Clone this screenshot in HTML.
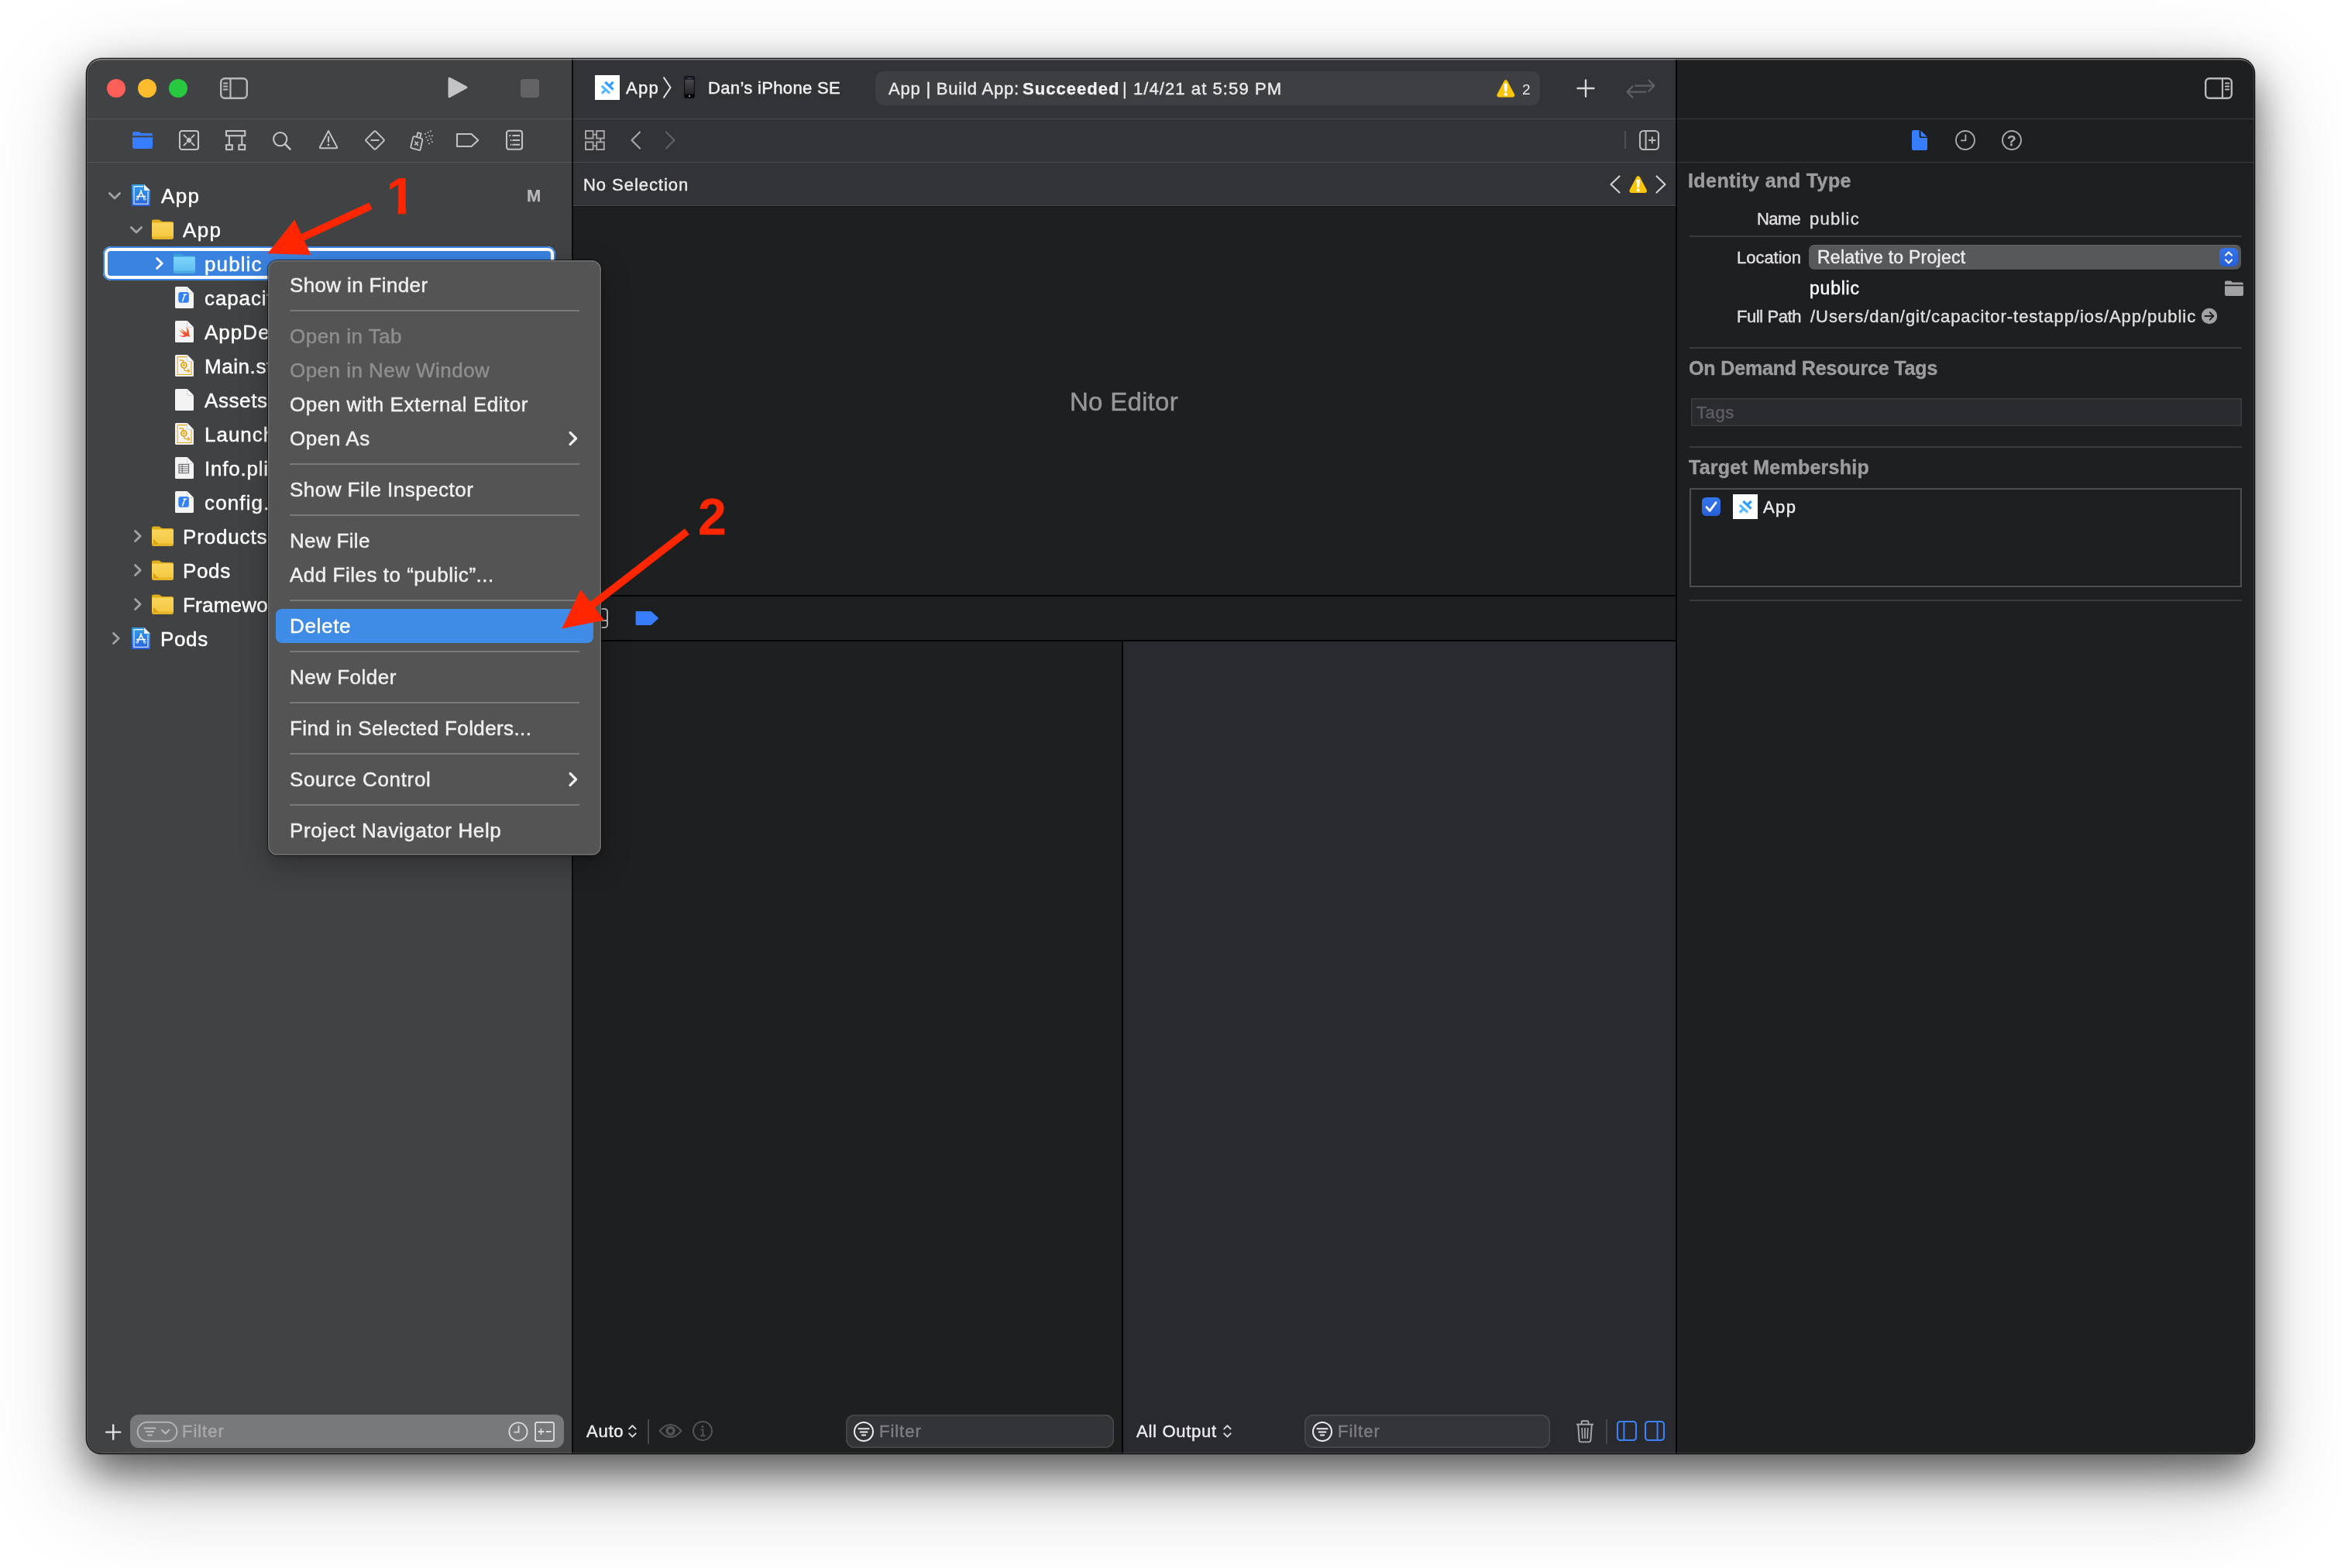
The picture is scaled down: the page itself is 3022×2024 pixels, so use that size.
<!DOCTYPE html>
<html lang="en"><head><meta charset="utf-8"><title>Xcode</title>
<style>
html,body{margin:0;padding:0;background:#fff;}
body{width:3022px;height:2024px;position:relative;overflow:hidden;font-family:"Liberation Sans",sans-serif;}
.b{position:absolute;display:block;}
.t{position:absolute;white-space:nowrap;display:block;will-change:transform;}
#shadow{position:absolute;left:111px;top:75px;width:2800px;height:1802px;border-radius:20px;
 box-shadow:0 0 0 .5px rgba(0,0,0,.5),0 24px 54px rgba(0,0,0,.58),0 40px 130px rgba(0,0,0,.22);}
#win{position:absolute;left:111px;top:75px;width:2800px;height:1802px;border-radius:20px;overflow:hidden;background:#1e1f21;}
#c{position:absolute;left:-111px;top:-75px;width:3022px;height:2024px;}
#rim{position:absolute;left:111px;top:75px;width:2800px;height:1802px;border-radius:20px;box-shadow:inset 0 0 0 1px rgba(0,0,0,.85), inset 0 0 0 2px rgba(255,255,255,.13), inset 0 2.5px 0 0 rgba(255,255,255,.3);pointer-events:none;}
</style></head><body>
<div id="shadow"></div>
<div id="win"><div id="c">
<div class="b" style="left:111px;top:75px;width:628px;height:1802px;background:#414244;"></div>
<div class="b" style="left:738px;top:75px;width:2px;height:1802px;background:#0c0c0d;"></div>
<div class="b" style="left:740px;top:75px;width:1423px;height:192px;background:#323336;"></div>
<div class="b" style="left:740px;top:267px;width:1423px;height:502px;background:#1e1f21;"></div>
<div class="b" style="left:740px;top:768px;width:1423px;height:2px;background:#050505;"></div>
<div class="b" style="left:740px;top:770px;width:1423px;height:56px;background:#1e1f21;"></div>
<div class="b" style="left:740px;top:826px;width:1423px;height:2px;background:#050505;"></div>
<div class="b" style="left:740px;top:828px;width:708px;height:1049px;background:#1e1f21;"></div>
<div class="b" style="left:1448px;top:828px;width:2px;height:1049px;background:#050505;"></div>
<div class="b" style="left:1450px;top:828px;width:713px;height:1049px;background:#292a30;"></div>
<div class="b" style="left:2163px;top:75px;width:2px;height:1802px;background:#050505;"></div>
<div class="b" style="left:2165px;top:75px;width:746px;height:1802px;background:#1e1f21;"></div>
<div class="b" style="left:111px;top:153px;width:627px;height:1px;background:#535456;"></div>
<div class="b" style="left:111px;top:209px;width:627px;height:1px;background:#535456;"></div>
<div class="b" style="left:740px;top:153px;width:1423px;height:1px;background:#4b4c4f;"></div>
<div class="b" style="left:740px;top:209px;width:1423px;height:1px;background:#4b4c4f;"></div>
<div class="b" style="left:740px;top:265px;width:1423px;height:1px;background:#4b4c4f;"></div>
<div class="b" style="left:740px;top:266px;width:1423px;height:1px;background:#111;"></div>
<div class="b" style="left:2165px;top:153px;width:746px;height:1px;background:#3a3b3e;"></div>
<div class="b" style="left:2165px;top:209px;width:746px;height:1px;background:#3a3b3e;"></div>
<div class="b" style="left:138px;top:102px;width:24px;height:24px;border-radius:50%;background:#fc5f57;"></div>
<div class="b" style="left:178px;top:102px;width:24px;height:24px;border-radius:50%;background:#fdbc2e;"></div>
<div class="b" style="left:218px;top:102px;width:24px;height:24px;border-radius:50%;background:#28c840;"></div>
<svg class="b" style="left:283px;top:99px;" width="38" height="30" viewBox="0 0 38 30"><rect x="2.2" y="2.2" width="33.6" height="25.6" rx="5" fill="none" stroke="#b9b9bb" stroke-width="2.4"/>
<line x1="14.5" y1="2" x2="14.5" y2="28" stroke="#b9b9bb" stroke-width="2.2"/>
<g stroke="#b9b9bb" stroke-width="2" stroke-linecap="round"><line x1="6" y1="8.5" x2="10.3" y2="8.5"/><line x1="6" y1="12.5" x2="10.3" y2="12.5"/><line x1="6" y1="16.5" x2="10.3" y2="16.5"/></g></svg>
<svg class="b" style="left:576px;top:97px;" width="30" height="32" viewBox="0 0 30 32"><path d="M4 4.2 L26 15.8 L4 27.6 Z" fill="#c3c3c5" stroke="#c3c3c5" stroke-width="3" stroke-linejoin="round"/></svg>
<div class="b" style="left:672px;top:102px;width:24px;height:24px;background:#636366;border-radius:4px;"></div>
<svg class="b" style="left:768px;top:97px;" width="32" height="32" viewBox="0 0 32 32"><rect width="32" height="32" fill="#fff"/>
<g stroke-width="3.1" fill="none"><path d="M13.3 9.0 L23.6 18.6" stroke="#2f9dff"/><path d="M18.6 13.9 L23.7 8.8" stroke="#2f9dff"/>
<path d="M8.8 13.9 L19.1 23.3" stroke="#53b9ff"/><path d="M13.9 18.7 L8.9 23.7" stroke="#53b9ff"/></g></svg>
<span class="t" style="left:808.40px;top:101px;font-size:22px;line-height:26px;color:#f2f2f2;letter-spacing:1.260px;-webkit-text-stroke:0.45px #f2f2f2;">App</span>
<svg class="b" style="left:853px;top:97px;" width="18" height="32" viewBox="0 0 18 32"><path d="M3.5 2.5 L12.5 16 L3.5 29.5" fill="none" stroke="#e4e4e4" stroke-width="2"/></svg>
<svg class="b" style="left:881px;top:97px;" width="18" height="32" viewBox="0 0 18 32"><defs><linearGradient id="ph" x1="0" y1="0" x2="0" y2="1"><stop offset="0" stop-color="#4a4a4d"/><stop offset="1" stop-color="#232325"/></linearGradient></defs>
<rect x="2" y="1" width="14" height="29" rx="2.2" fill="#050506" stroke="#2a2b33" stroke-width="0.8"/>
<rect x="3.2" y="6" width="11.6" height="18.6" fill="url(#ph)"/><rect x="3.2" y="2.2" width="11.6" height="3.8" fill="#1d2030"/>
<rect x="8" y="26" width="2" height="2" fill="#8a8a8a"/><rect x="7" y="3.6" width="4" height="0.9" fill="#555a6a"/></svg>
<span class="t" style="left:913.54px;top:101px;font-size:22px;line-height:26px;color:#f2f2f2;letter-spacing:0.340px;-webkit-text-stroke:0.45px #f2f2f2;">Dan’s iPhone SE</span>
<div class="b" style="left:1130px;top:92px;width:858px;height:44px;background:#3e3f42;border-radius:11px;"></div>
<span class="t" style="left:1147.00px;top:102px;font-size:22px;line-height:26px;color:#e9e9ea;letter-spacing:0.793px;-webkit-text-stroke:0.45px #e9e9ea;">App | Build App:</span>
<span class="t" style="left:1320.04px;top:102px;font-size:22px;line-height:26px;color:#f2f2f3;letter-spacing:1.029px;font-weight:bold;-webkit-text-stroke:0.25px #f2f2f3;">Succeeded</span>
<span class="t" style="left:1449.42px;top:102px;font-size:22px;line-height:26px;color:#e9e9ea;letter-spacing:1.082px;-webkit-text-stroke:0.45px #e9e9ea;">| 1/4/21 at 5:59 PM</span>
<svg class="b" style="left:1932.3px;top:101.6px;" width="23.6" height="24.6" viewBox="0 0 24 25"><path d="M9.7 2.7 Q12 -0.7 14.3 2.7 L23.2 19.5 Q24.8 23.6 20.6 23.9 L3.4 23.9 Q-0.8 23.6 0.8 19.5 Z" fill="#f8c50a"/>
<path d="M9.7 7.4 Q9.7 5.6 12 5.6 Q14.3 5.6 14.3 7.4 L13.5 15.9 Q13.4 17.1 12 17.1 Q10.6 17.1 10.5 15.9 Z" fill="#fff"/><circle cx="12" cy="20.2" r="2.05" fill="#fff"/></svg>
<span class="t" style="left:1964.65px;top:104px;font-size:19px;line-height:23px;color:#e9e9ea;">2</span>
<svg class="b" style="left:2035px;top:102px;" width="24" height="24" viewBox="0 0 24 24"><path d="M12 1.5 V22.5 M1.5 12 H22.5" stroke="#d6d6d8" stroke-width="2.4" stroke-linecap="round"/></svg>
<svg class="b" style="left:2098px;top:100px;" width="40" height="28" viewBox="0 0 40 28"><g fill="none" stroke="#5e5f62" stroke-width="2.2" stroke-linecap="round" stroke-linejoin="round"><path d="M13 10.6 H37 M30.4 3.6 L37.4 10.6 L30.4 17.6"/><path d="M26.5 18.6 H2.5 M9.5 11.6 L2.5 18.6 L9.5 25.6"/></g></svg>
<svg class="b" style="left:2845px;top:99px;" width="38" height="30" viewBox="0 0 38 30"><rect x="2.2" y="2.2" width="33.6" height="25.6" rx="5" fill="none" stroke="#b9b9bb" stroke-width="2.4"/>
<line x1="24" y1="2" x2="24" y2="28" stroke="#b9b9bb" stroke-width="2.2"/>
<g stroke="#b9b9bb" stroke-width="2" stroke-linecap="round"><line x1="28" y1="8.5" x2="32.2" y2="8.5"/><line x1="28" y1="12.5" x2="32.2" y2="12.5"/><line x1="28" y1="16.5" x2="32.2" y2="16.5"/></g></svg>
<svg class="b" style="left:171px;top:169px;" width="27" height="24" viewBox="0 0 27 24"><path d="M0 6.2 V3.2 Q0 1 2.4 1 H7.2 Q8.6 1 9.8 1.9 L10.6 2.5 Q11.4 3 12.6 3 H23.4 Q26 3 26 5.6 V6.2 Z M0 8.3 H26 V20.2 Q26 23 23.2 23 H2.8 Q0 23 0 20.2 Z" fill="#377dff"/></svg>
<svg class="b" style="left:230px;top:167px;" width="28" height="28" viewBox="0 0 28 28"><rect x="2" y="2" width="24" height="24" rx="3" fill="none" stroke="#c2c2c4" stroke-width="2.1"/><circle cx="14" cy="14" r="3.2" fill="#c2c2c4"/>
<g stroke="#c2c2c4" stroke-width="1.9" stroke-linecap="round"><path d="M7.5 7.5 L10.6 10.6 M20.5 7.5 L17.4 10.6 M7.5 20.5 L10.6 17.4 M20.5 20.5 L17.4 17.4"/></g></svg>
<svg class="b" style="left:290px;top:167px;" width="28" height="28" viewBox="0 0 28 28"><g fill="none" stroke="#c2c2c4" stroke-width="2.1"><rect x="2" y="2" width="24.3" height="6.2"/><rect x="2" y="20.2" width="7.8" height="5.9"/><rect x="18.4" y="20.2" width="7.8" height="5.9"/><path d="M5.9 8.2 V20.2 M22.3 8.2 V20.2"/></g></svg>
<svg class="b" style="left:350px;top:167px;" width="28" height="28" viewBox="0 0 28 28"><circle cx="11.7" cy="12.6" r="8.6" fill="none" stroke="#c2c2c4" stroke-width="2.1"/><path d="M18 19 L24.6 25.6" stroke="#c2c2c4" stroke-width="2.6" stroke-linecap="round"/></svg>
<svg class="b" style="left:410px;top:166px;" width="28" height="28" viewBox="0 0 28 28"><path d="M14 3 L25 23.6 Q25.6 25.2 24 25.2 H4 Q2.4 25.2 3 23.6 Z" fill="none" stroke="#c2c2c4" stroke-width="2" stroke-linejoin="round"/><rect x="12.9" y="9.8" width="2.2" height="8" rx="1.1" fill="#c2c2c4"/><circle cx="14" cy="21" r="1.4" fill="#c2c2c4"/></svg>
<svg class="b" style="left:469px;top:166px;" width="30" height="30" viewBox="0 0 30 30"><rect x="6.2" y="6.2" width="17.6" height="17.6" rx="2" transform="rotate(45 15 15)" fill="none" stroke="#c2c2c4" stroke-width="2"/><path d="M10.4 15 H19.6" stroke="#c2c2c4" stroke-width="2.1" stroke-linecap="round"/></svg>
<svg class="b" style="left:528px;top:166px;" width="34" height="30" viewBox="0 0 34 30"><g fill="none" stroke="#c2c2c4" stroke-width="1.9" stroke-linejoin="round"><path d="M7.2 10.2 L16.2 12.8 Q17.6 13.3 17.3 14.8 L14.6 27 Q14.3 28.2 13 27.9 L3.2 25.2 Q2 24.8 2.3 23.6 L5.2 11.4 Q5.6 9.8 7.2 10.2 Z"/><path d="M10 10.8 L11.4 5.2 L15.6 6.4 L14.2 12"/><path d="M7.6 16.6 L11.8 22 M12.2 17.2 L7.2 21.2" stroke-width="1.7"/></g>
<g fill="#c2c2c4"><rect x="20" y="6" width="1.7" height="1.7"/><rect x="23.6" y="4.2" width="1.7" height="1.7"/><rect x="27.2" y="2.4" width="1.7" height="1.7"/><rect x="21.6" y="10.4" width="1.7" height="1.7"/><rect x="25.4" y="8.6" width="1.7" height="1.7"/><rect x="29" y="8.4" width="1.7" height="1.7"/><rect x="23.4" y="14.4" width="1.7" height="1.7"/><rect x="27.4" y="12.6" width="1.7" height="1.7"/><rect x="29" y="16.4" width="1.7" height="1.7"/><rect x="25.2" y="18.6" width="1.7" height="1.7"/></g></svg>
<svg class="b" style="left:588px;top:170px;" width="32" height="22" viewBox="0 0 32 22"><path d="M2 3 H20.6 L29.2 11 L20.6 19 H2 Z" fill="none" stroke="#c2c2c4" stroke-width="2.1" stroke-linejoin="round"/></svg>
<svg class="b" style="left:651px;top:166px;" width="26" height="30" viewBox="0 0 26 30"><rect x="3" y="2.8" width="20" height="24" rx="3" fill="none" stroke="#c2c2c4" stroke-width="2.1"/><g stroke="#c2c2c4" stroke-width="1.9"><path d="M10.4 9 H20 M10.4 15 H20 M10.4 20.8 H20"/><path d="M6.4 9 H8.2 M7.8 15 H9.4 M7.8 20.8 H9.4"/></g></svg>
<svg class="b" style="left:754px;top:167px;" width="28" height="28" viewBox="0 0 28 28"><g fill="none" stroke="#a4a4a6" stroke-width="2"><rect x="2" y="2" width="9.6" height="9.6"/><rect x="16.2" y="2" width="9.6" height="9.6"/><rect x="2" y="16.4" width="9.6" height="9.6"/><rect x="16.2" y="16.4" width="9.6" height="9.6"/><path d="M11.6 6.8 H16.2 M11.6 21.2 H16.2 M21 11.6 V16.4 M16.2 21.2 H11.6"/></g></svg>
<svg class="b" style="left:811px;top:167px;" width="20" height="28" viewBox="0 0 20 28"><path d="M15 3.5 L4.5 14 L15 24.5" fill="none" stroke="#a4a4a6" stroke-width="2.2" stroke-linecap="round" stroke-linejoin="round"/></svg>
<svg class="b" style="left:855px;top:167px;" width="20" height="28" viewBox="0 0 20 28"><path d="M5 3.5 L15.5 14 L5 24.5" fill="none" stroke="#5f6063" stroke-width="2.2" stroke-linecap="round" stroke-linejoin="round"/></svg>
<div class="b" style="left:2097px;top:169px;width:2px;height:23px;background:#4d4e51;"></div>
<svg class="b" style="left:2115px;top:167px;" width="28" height="28" viewBox="0 0 28 28"><rect x="2" y="2" width="24" height="24" rx="4.5" fill="none" stroke="#b9b9bb" stroke-width="2.1"/><path d="M9.6 2 V26" stroke="#b9b9bb" stroke-width="2"/><path d="M17.8 9.4 V18.6 M13.2 14 H22.4" stroke="#b9b9bb" stroke-width="2" /></svg>
<span class="t" style="left:753.24px;top:226px;font-size:22px;line-height:26px;color:#eaeaeb;letter-spacing:0.950px;-webkit-text-stroke:0.45px #eaeaeb;">No Selection</span>
<svg class="b" style="left:2076px;top:225px;" width="18" height="26" viewBox="0 0 18 26"><path d="M14.5 2.5 L3.5 13 L14.5 23.5" fill="none" stroke="#d0d0d2" stroke-width="2.2" stroke-linecap="round" stroke-linejoin="round"/></svg>
<svg class="b" style="left:2103.3px;top:226.2px;" width="23.4" height="24.2" viewBox="0 0 24 25"><path d="M9.7 2.7 Q12 -0.7 14.3 2.7 L23.2 19.5 Q24.8 23.6 20.6 23.9 L3.4 23.9 Q-0.8 23.6 0.8 19.5 Z" fill="#f8c50a"/>
<path d="M9.7 7.4 Q9.7 5.6 12 5.6 Q14.3 5.6 14.3 7.4 L13.5 15.9 Q13.4 17.1 12 17.1 Q10.6 17.1 10.5 15.9 Z" fill="#fff"/><circle cx="12" cy="20.2" r="2.05" fill="#fff"/></svg>
<svg class="b" style="left:2135px;top:225px;" width="18" height="26" viewBox="0 0 18 26"><path d="M3.5 2.5 L14.5 13 L3.5 23.5" fill="none" stroke="#d0d0d2" stroke-width="2.2" stroke-linecap="round" stroke-linejoin="round"/></svg>
<div class="b" style="left:133px;top:318px;width:584px;height:44px;background:#3b83e1;border-radius:10px;box-shadow:inset 0 0 0 2px #3b83e1, inset 0 0 0 6px #fff;"></div>
<svg class="b" style="left:138px;top:246px;" width="20" height="13" viewBox="0 0 20 13"><path d="M3.4 3.4 L10 10 L16.6 3.4" fill="none" stroke="#a2a2a5" stroke-width="2.8" stroke-linecap="round" stroke-linejoin="round"/></svg>
<svg class="b" style="left:170px;top:238px;" width="24" height="28" viewBox="0 0 24 28"><defs><linearGradient id="pg1" x1="0" y1="0" x2="0" y2="1"><stop offset="0" stop-color="#2f9ee9"/><stop offset="1" stop-color="#2a62df"/></linearGradient></defs>
<path d="M1.2 0 H16 L24 8 V26.8 Q24 28 22.8 28 H1.2 Q0 28 0 26.8 V1.2 Q0 0 1.2 0 Z" fill="url(#pg1)"/>
<path d="M16 0 L24 8 H17.2 Q16 8 16 6.8 Z" fill="#eaf3fd"/>
<path d="M3 2.6 H15 M21 9 V25.2 H3 V2.6" fill="none" stroke="#fff" stroke-width="1.1" opacity=".95"/>
<g fill="none" stroke="#fff" stroke-width="1.5" stroke-linecap="round"><path d="M12.6 8.2 L7.4 18.6 M11.4 8.2 L16.6 18.6 M6.4 15.6 H17.6"/></g>
<g fill="#2a6fe3" stroke="#fff" stroke-width="0.9"><circle cx="7.2" cy="19" r="1.3"/><circle cx="16.8" cy="19" r="1.3"/></g></svg>
<span class="t" style="left:208.20px;top:238px;font-size:26px;line-height:31px;color:#ffffff;letter-spacing:1.380px;-webkit-text-stroke:0.45px #ffffff;">App</span>
<svg class="b" style="left:166px;top:290px;" width="20" height="13" viewBox="0 0 20 13"><path d="M3.4 3.4 L10 10 L16.6 3.4" fill="none" stroke="#a2a2a5" stroke-width="2.8" stroke-linecap="round" stroke-linejoin="round"/></svg>
<svg class="b" style="left:196px;top:283px;" width="28" height="26" viewBox="0 0 28 26"><defs><linearGradient id="fg2" x1="0" y1="0" x2="0" y2="1"><stop offset="0" stop-color="#f9d55c"/><stop offset="1" stop-color="#f4c63d"/></linearGradient></defs>
<path d="M0 5 V2.6 Q0 0.4 2.2 0.4 H8.4 Q9.8 0.4 10.8 1.3 L11.8 2.2 Q12.8 3 14.2 3 H25.6 Q28 3 28 5.4 V8 H0 Z" fill="#e2ae1c"/>
<path d="M0 5.6 Q0 4.6 1 4.6 H27 Q28 4.6 28 5.6 V23.6 Q28 26 25.6 26 H2.4 Q0 26 0 23.6 Z" fill="url(#fg2)"/>
<path d="M0 22.4 H28 V23.6 Q28 26 25.6 26 H2.4 Q0 26 0 23.6 Z" fill="#d9a516" opacity=".55"/></svg>
<span class="t" style="left:236.40px;top:282px;font-size:26px;line-height:31px;color:#ffffff;letter-spacing:1.380px;-webkit-text-stroke:0.45px #ffffff;">App</span>
<svg class="b" style="left:199px;top:330px;" width="14" height="20" viewBox="0 0 14 20"><path d="M3.5 3.4 L10.2 10 L3.5 16.6" fill="none" stroke="#fff" stroke-width="2.8" stroke-linecap="round" stroke-linejoin="round"/></svg>
<svg class="b" style="left:224px;top:327px;" width="28" height="26" viewBox="0 0 28 26"><defs><linearGradient id="fg3" x1="0" y1="0" x2="0" y2="1"><stop offset="0" stop-color="#7dd3fb"/><stop offset="1" stop-color="#5cbdf0"/></linearGradient></defs>
<path d="M0 5 V2.6 Q0 0.4 2.2 0.4 H8.4 Q9.8 0.4 10.8 1.3 L11.8 2.2 Q12.8 3 14.2 3 H25.6 Q28 3 28 5.4 V8 H0 Z" fill="#3aa0dc"/>
<path d="M0 5.6 Q0 4.6 1 4.6 H27 Q28 4.6 28 5.6 V23.6 Q28 26 25.6 26 H2.4 Q0 26 0 23.6 Z" fill="url(#fg3)"/>
<path d="M0 22.4 H28 V23.6 Q28 26 25.6 26 H2.4 Q0 26 0 23.6 Z" fill="#3a9bd6" opacity=".55"/></svg>
<span class="t" style="left:263.81px;top:326px;font-size:26px;line-height:31px;color:#ffffff;letter-spacing:1.110px;-webkit-text-stroke:0.45px #ffffff;">public</span>
<svg class="b" style="left:226px;top:370px;" width="24" height="28" viewBox="0 0 24 28"><path d="M1.6 0 H15.6 L24 8.4 V26.4 Q24 28 22.4 28 H1.6 Q0 28 0 26.4 V1.6 Q0 0 1.6 0 Z" fill="#f3f3f4"/>
<path d="M15.6 0 L24 8.4 H17 Q15.6 8.4 15.6 7 Z" fill="#fbfbfc"/><path d="M15.6 0.4 V7 Q15.6 8.4 17 8.4 H23.6" fill="none" stroke="#c9c9cc" stroke-width="0.9"/><rect x="4.3" y="7" width="13.6" height="13.8" rx="3.4" fill="#3380f7"/><path d="M11.2 10.2 H14.5 M12.5 10.4 L9.6 18.7" stroke="#fff" stroke-width="1.5" fill="none" stroke-linecap="round"/></svg>
<span class="t" style="left:263.86px;top:370px;font-size:26px;line-height:31px;color:#ffffff;letter-spacing:0.878px;-webkit-text-stroke:0.45px #ffffff;">capacitor.config.json</span>
<svg class="b" style="left:226px;top:414px;" width="24" height="28" viewBox="0 0 24 28"><path d="M1.6 0 H15.6 L24 8.4 V26.4 Q24 28 22.4 28 H1.6 Q0 28 0 26.4 V1.6 Q0 0 1.6 0 Z" fill="#f3f3f4"/>
<path d="M15.6 0 L24 8.4 H17 Q15.6 8.4 15.6 7 Z" fill="#fbfbfc"/><path d="M15.6 0.4 V7 Q15.6 8.4 17 8.4 H23.6" fill="none" stroke="#c9c9cc" stroke-width="0.9"/><defs><linearGradient id="swg" x1="0" y1="0" x2="0" y2="1"><stop offset="0" stop-color="#f88a36"/><stop offset="1" stop-color="#f5382a"/></linearGradient></defs><path transform="translate(-1.7 -1.5) scale(1.03)" d="M5 18.6 Q9.4 21.6 13.6 19.6 Q9 16.4 6.2 11.8 Q9.6 15 13 16.8 Q10.6 14 9 11 Q12.6 14.6 16 16.6 Q17.4 12.6 14.6 8.6 Q20.4 12.8 19 18.4 Q20.6 20.2 19.8 22 Q18.8 20.2 16.8 20.6 Q10.6 23.6 5 18.6 Z" fill="url(#swg)"/></svg>
<span class="t" style="left:264.30px;top:414px;font-size:26px;line-height:31px;color:#ffffff;letter-spacing:1.023px;-webkit-text-stroke:0.45px #ffffff;">AppDelegate.swift</span>
<svg class="b" style="left:226px;top:458px;" width="24" height="28" viewBox="0 0 24 28"><path d="M1.6 0 H15.6 L24 8.4 V26.4 Q24 28 22.4 28 H1.6 Q0 28 0 26.4 V1.6 Q0 0 1.6 0 Z" fill="#f3f3f4"/>
<path d="M15.6 0 L24 8.4 H17 Q15.6 8.4 15.6 7 Z" fill="#fbfbfc"/><path d="M15.6 0.4 V7 Q15.6 8.4 17 8.4 H23.6" fill="none" stroke="#c9c9cc" stroke-width="0.9"/><path d="M3.2 2.6 H15 M21 9 V25.4 H3.2 V2.6" fill="none" stroke="#e2a81c" stroke-width="1.05"/>
<g fill="none" stroke="#e2a81c" stroke-width="1.3"><circle cx="11.4" cy="13.4" r="3.5" stroke-width="1.9"/><circle cx="11.4" cy="13.4" r="0.8" fill="#e2a81c"/><path d="M5.4 6.8 H8.6 Q11 6.8 11.2 9.6 M11.4 17 Q11.4 20.4 14.4 20.6 H18.4 M16.4 18.4 L18.6 20.6 L16.4 22.8"/></g></svg>
<span class="t" style="left:263.72px;top:458px;font-size:26px;line-height:31px;color:#ffffff;letter-spacing:0.564px;-webkit-text-stroke:0.45px #ffffff;">Main.storyboard</span>
<svg class="b" style="left:226px;top:502px;" width="24" height="28" viewBox="0 0 24 28"><path d="M1.6 0 H15.6 L24 8.4 V26.4 Q24 28 22.4 28 H1.6 Q0 28 0 26.4 V1.6 Q0 0 1.6 0 Z" fill="#f3f3f4"/>
<path d="M15.6 0 L24 8.4 H17 Q15.6 8.4 15.6 7 Z" fill="#fbfbfc"/><path d="M15.6 0.4 V7 Q15.6 8.4 17 8.4 H23.6" fill="none" stroke="#c9c9cc" stroke-width="0.9"/></svg>
<span class="t" style="left:264.30px;top:502px;font-size:26px;line-height:31px;color:#ffffff;letter-spacing:0.582px;-webkit-text-stroke:0.45px #ffffff;">Assets.xcassets</span>
<svg class="b" style="left:226px;top:546px;" width="24" height="28" viewBox="0 0 24 28"><path d="M1.6 0 H15.6 L24 8.4 V26.4 Q24 28 22.4 28 H1.6 Q0 28 0 26.4 V1.6 Q0 0 1.6 0 Z" fill="#f3f3f4"/>
<path d="M15.6 0 L24 8.4 H17 Q15.6 8.4 15.6 7 Z" fill="#fbfbfc"/><path d="M15.6 0.4 V7 Q15.6 8.4 17 8.4 H23.6" fill="none" stroke="#c9c9cc" stroke-width="0.9"/><path d="M3.2 2.6 H15 M21 9 V25.4 H3.2 V2.6" fill="none" stroke="#e2a81c" stroke-width="1.05"/>
<g fill="none" stroke="#e2a81c" stroke-width="1.3"><circle cx="11.4" cy="13.4" r="3.5" stroke-width="1.9"/><circle cx="11.4" cy="13.4" r="0.8" fill="#e2a81c"/><path d="M5.4 6.8 H8.6 Q11 6.8 11.2 9.6 M11.4 17 Q11.4 20.4 14.4 20.6 H18.4 M16.4 18.4 L18.6 20.6 L16.4 22.8"/></g></svg>
<span class="t" style="left:263.72px;top:546px;font-size:26px;line-height:31px;color:#ffffff;letter-spacing:0.995px;-webkit-text-stroke:0.45px #ffffff;">LaunchScreen.storyboard</span>
<svg class="b" style="left:226px;top:590px;" width="24" height="28" viewBox="0 0 24 28"><path d="M1.6 0 H15.6 L24 8.4 V26.4 Q24 28 22.4 28 H1.6 Q0 28 0 26.4 V1.6 Q0 0 1.6 0 Z" fill="#f3f3f4"/>
<path d="M15.6 0 L24 8.4 H17 Q15.6 8.4 15.6 7 Z" fill="#fbfbfc"/><path d="M15.6 0.4 V7 Q15.6 8.4 17 8.4 H23.6" fill="none" stroke="#c9c9cc" stroke-width="0.9"/><g fill="none" stroke="#6c6c70" stroke-width="1.1"><rect x="5" y="9.4" width="12.6" height="11.2"/><path d="M5 12.2 H17.6 M5 15 H17.6 M5 17.8 H17.6 M9.2 9.4 V20.6"/></g></svg>
<span class="t" style="left:263.56px;top:590px;font-size:26px;line-height:31px;color:#ffffff;letter-spacing:0.766px;-webkit-text-stroke:0.45px #ffffff;">Info.plist</span>
<svg class="b" style="left:226px;top:634px;" width="24" height="28" viewBox="0 0 24 28"><path d="M1.6 0 H15.6 L24 8.4 V26.4 Q24 28 22.4 28 H1.6 Q0 28 0 26.4 V1.6 Q0 0 1.6 0 Z" fill="#f3f3f4"/>
<path d="M15.6 0 L24 8.4 H17 Q15.6 8.4 15.6 7 Z" fill="#fbfbfc"/><path d="M15.6 0.4 V7 Q15.6 8.4 17 8.4 H23.6" fill="none" stroke="#c9c9cc" stroke-width="0.9"/><rect x="4.3" y="7" width="13.6" height="13.8" rx="3.4" fill="#3380f7"/><path d="M11.2 10.2 H14.5 M12.5 10.4 L9.6 18.7" stroke="#fff" stroke-width="1.5" fill="none" stroke-linecap="round"/></svg>
<span class="t" style="left:263.76px;top:634px;font-size:26px;line-height:31px;color:#ffffff;letter-spacing:1.135px;-webkit-text-stroke:0.45px #ffffff;">config.xml</span>
<svg class="b" style="left:171px;top:682px;" width="14" height="20" viewBox="0 0 14 20"><path d="M3.5 3.4 L10.2 10 L3.5 16.6" fill="none" stroke="#a2a2a5" stroke-width="2.8" stroke-linecap="round" stroke-linejoin="round"/></svg>
<svg class="b" style="left:196px;top:679px;" width="28" height="26" viewBox="0 0 28 26"><defs><linearGradient id="fg4" x1="0" y1="0" x2="0" y2="1"><stop offset="0" stop-color="#f9d55c"/><stop offset="1" stop-color="#f4c63d"/></linearGradient></defs>
<path d="M0 5 V2.6 Q0 0.4 2.2 0.4 H8.4 Q9.8 0.4 10.8 1.3 L11.8 2.2 Q12.8 3 14.2 3 H25.6 Q28 3 28 5.4 V8 H0 Z" fill="#e2ae1c"/>
<path d="M0 5.6 Q0 4.6 1 4.6 H27 Q28 4.6 28 5.6 V23.6 Q28 26 25.6 26 H2.4 Q0 26 0 23.6 Z" fill="url(#fg4)"/>
<path d="M0 22.4 H28 V23.6 Q28 26 25.6 26 H2.4 Q0 26 0 23.6 Z" fill="#d9a516" opacity=".55"/><path d="M1.8 16.4 L9.6 23.6 H3 Q1.8 23.6 1.8 22.4 Z" fill="#d9a516"/></svg>
<span class="t" style="left:235.82px;top:678px;font-size:26px;line-height:31px;color:#ffffff;letter-spacing:0.846px;-webkit-text-stroke:0.45px #ffffff;">Products</span>
<svg class="b" style="left:171px;top:726px;" width="14" height="20" viewBox="0 0 14 20"><path d="M3.5 3.4 L10.2 10 L3.5 16.6" fill="none" stroke="#a2a2a5" stroke-width="2.8" stroke-linecap="round" stroke-linejoin="round"/></svg>
<svg class="b" style="left:196px;top:723px;" width="28" height="26" viewBox="0 0 28 26"><defs><linearGradient id="fg5" x1="0" y1="0" x2="0" y2="1"><stop offset="0" stop-color="#f9d55c"/><stop offset="1" stop-color="#f4c63d"/></linearGradient></defs>
<path d="M0 5 V2.6 Q0 0.4 2.2 0.4 H8.4 Q9.8 0.4 10.8 1.3 L11.8 2.2 Q12.8 3 14.2 3 H25.6 Q28 3 28 5.4 V8 H0 Z" fill="#e2ae1c"/>
<path d="M0 5.6 Q0 4.6 1 4.6 H27 Q28 4.6 28 5.6 V23.6 Q28 26 25.6 26 H2.4 Q0 26 0 23.6 Z" fill="url(#fg5)"/>
<path d="M0 22.4 H28 V23.6 Q28 26 25.6 26 H2.4 Q0 26 0 23.6 Z" fill="#d9a516" opacity=".55"/><path d="M1.8 16.4 L9.6 23.6 H3 Q1.8 23.6 1.8 22.4 Z" fill="#d9a516"/></svg>
<span class="t" style="left:235.82px;top:722px;font-size:26px;line-height:31px;color:#ffffff;letter-spacing:0.637px;-webkit-text-stroke:0.45px #ffffff;">Pods</span>
<svg class="b" style="left:171px;top:770px;" width="14" height="20" viewBox="0 0 14 20"><path d="M3.5 3.4 L10.2 10 L3.5 16.6" fill="none" stroke="#a2a2a5" stroke-width="2.8" stroke-linecap="round" stroke-linejoin="round"/></svg>
<svg class="b" style="left:196px;top:767px;" width="28" height="26" viewBox="0 0 28 26"><defs><linearGradient id="fg6" x1="0" y1="0" x2="0" y2="1"><stop offset="0" stop-color="#f9d55c"/><stop offset="1" stop-color="#f4c63d"/></linearGradient></defs>
<path d="M0 5 V2.6 Q0 0.4 2.2 0.4 H8.4 Q9.8 0.4 10.8 1.3 L11.8 2.2 Q12.8 3 14.2 3 H25.6 Q28 3 28 5.4 V8 H0 Z" fill="#e2ae1c"/>
<path d="M0 5.6 Q0 4.6 1 4.6 H27 Q28 4.6 28 5.6 V23.6 Q28 26 25.6 26 H2.4 Q0 26 0 23.6 Z" fill="url(#fg6)"/>
<path d="M0 22.4 H28 V23.6 Q28 26 25.6 26 H2.4 Q0 26 0 23.6 Z" fill="#d9a516" opacity=".55"/><path d="M1.8 16.4 L9.6 23.6 H3 Q1.8 23.6 1.8 22.4 Z" fill="#d9a516"/></svg>
<span class="t" style="left:235.82px;top:766px;font-size:26px;line-height:31px;color:#ffffff;letter-spacing:0.238px;-webkit-text-stroke:0.45px #ffffff;">Frameworks</span>
<svg class="b" style="left:143px;top:814px;" width="14" height="20" viewBox="0 0 14 20"><path d="M3.5 3.4 L10.2 10 L3.5 16.6" fill="none" stroke="#a2a2a5" stroke-width="2.8" stroke-linecap="round" stroke-linejoin="round"/></svg>
<svg class="b" style="left:170px;top:810px;" width="24" height="28" viewBox="0 0 24 28"><defs><linearGradient id="pg7" x1="0" y1="0" x2="0" y2="1"><stop offset="0" stop-color="#2f9ee9"/><stop offset="1" stop-color="#2a62df"/></linearGradient></defs>
<path d="M1.2 0 H16 L24 8 V26.8 Q24 28 22.8 28 H1.2 Q0 28 0 26.8 V1.2 Q0 0 1.2 0 Z" fill="url(#pg7)"/>
<path d="M16 0 L24 8 H17.2 Q16 8 16 6.8 Z" fill="#eaf3fd"/>
<path d="M3 2.6 H15 M21 9 V25.2 H3 V2.6" fill="none" stroke="#fff" stroke-width="1.1" opacity=".95"/>
<g fill="none" stroke="#fff" stroke-width="1.5" stroke-linecap="round"><path d="M12.6 8.2 L7.4 18.6 M11.4 8.2 L16.6 18.6 M6.4 15.6 H17.6"/></g>
<g fill="#2a6fe3" stroke="#fff" stroke-width="0.9"><circle cx="7.2" cy="19" r="1.3"/><circle cx="16.8" cy="19" r="1.3"/></g></svg>
<span class="t" style="left:207.12px;top:810px;font-size:26px;line-height:31px;color:#ffffff;letter-spacing:0.637px;-webkit-text-stroke:0.45px #ffffff;">Pods</span>
<span class="t" style="left:679.57px;top:240px;font-size:22px;line-height:26px;color:#b9b9bb;letter-spacing:1.600px;font-weight:bold;-webkit-text-stroke:0.25px #b9b9bb;">M</span>
<svg class="b" style="left:134px;top:1836px;" width="24" height="24" viewBox="0 0 24 24"><path d="M12.2 3.4 V21.8 M3 12.6 H21.4" stroke="#e2e2e4" stroke-width="2.4" stroke-linecap="round"/></svg>
<div class="b" style="left:168px;top:1826px;width:560px;height:43px;background:#78797b;border-radius:11px;"></div>
<svg class="b" style="left:176px;top:1834px;" width="54" height="28" viewBox="0 0 54 28"><rect x="1.6" y="1.8" width="50.8" height="24.4" rx="12.2" fill="none" stroke="#b3b3b5" stroke-width="2"/>
<g stroke="#b9b9bb" stroke-width="2" stroke-linecap="round"><path d="M10.6 9.6 H24.4 M12.8 14 H22.2 M15 18.4 H20"/><path d="M33 12 L37.6 16.4 L42.2 12" fill="none" stroke-linejoin="round" stroke-width="2.2"/></g></svg>
<span class="t" style="left:235.24px;top:1835px;font-size:22px;line-height:26px;color:#a9a9ab;letter-spacing:0.970px;-webkit-text-stroke:0.45px #a9a9ab;">Filter</span>
<svg class="b" style="left:655px;top:1834px;" width="28" height="28" viewBox="0 0 28 28"><circle cx="14" cy="14" r="11.6" fill="none" stroke="#d8d8da" stroke-width="1.9"/><path d="M14.6 6.6 V14.6 H8.4" fill="none" stroke="#d8d8da" stroke-width="1.9"/></svg>
<svg class="b" style="left:689px;top:1834px;" width="28" height="28" viewBox="0 0 28 28"><rect x="2" y="2" width="24" height="24" rx="2.4" fill="none" stroke="#d8d8da" stroke-width="1.9"/><path d="M5.6 14 H13.2 M9.4 10.2 V17.8 M15.8 14 H22.6" stroke="#d8d8da" stroke-width="1.9"/></svg>
<span class="t" style="left:1381.36px;top:499px;font-size:33px;line-height:40px;color:#979799;letter-spacing:0.261px;-webkit-text-stroke:0.45px #979799;">No Editor</span>
<svg class="b" style="left:758px;top:784px;" width="28" height="28" viewBox="0 0 28 28"><rect x="2" y="2" width="24" height="24" rx="3.5" fill="none" stroke="#b9b9bb" stroke-width="2"/><path d="M2 17 H26" stroke="#b9b9bb" stroke-width="2"/></svg>
<svg class="b" style="left:820px;top:788px;" width="32" height="22" viewBox="0 0 32 22"><path d="M1.6 1 H19.4 Q20.6 1 21.4 1.8 L30.2 10 L21.4 18.2 Q20.6 19 19.4 19 H1.6 Q0.6 19 0.6 18 V2 Q0.6 1 1.6 1 Z" fill="#377dff"/></svg>
<span class="t" style="left:757.00px;top:1835px;font-size:22px;line-height:26px;color:#ececee;letter-spacing:0.757px;-webkit-text-stroke:0.45px #ececee;">Auto</span>
<svg class="b" style="left:810px;top:1838px;" width="13" height="20" viewBox="0 0 13 20"><g fill="none" stroke="#d6d6d8" stroke-width="2" stroke-linecap="round" stroke-linejoin="round"><path d="M2.2 6.4 L6.4 2.2 L10.6 6.4 M2.2 12.4 L6.4 16.6 L10.6 12.4"/></g></svg>
<div class="b" style="left:836px;top:1832px;width:2px;height:32px;background:#48494c;"></div>
<svg class="b" style="left:849px;top:1834px;" width="34" height="26" viewBox="0 0 34 26"><path d="M2.6 13 Q16.5 -3.2 30.4 13 Q16.5 29.2 2.6 13 Z" fill="none" stroke="#525356" stroke-width="2"/><circle cx="16.5" cy="13" r="6.2" fill="#525356"/><circle cx="16.5" cy="13" r="2.6" fill="#1e1f21"/></svg>
<svg class="b" style="left:893px;top:1833px;" width="28" height="28" viewBox="0 0 28 28"><circle cx="14" cy="14" r="12" fill="none" stroke="#525356" stroke-width="2"/><circle cx="14" cy="8.4" r="1.5" fill="#525356"/><path d="M11.6 12.4 H14.4 V20 M11 20.2 H17.6" fill="none" stroke="#525356" stroke-width="1.9"/></svg>
<div class="b" style="left:1092px;top:1826px;width:346px;height:43px;background:#333437;border-radius:11px;box-shadow:inset 0 0 0 1.5px #48494c;"></div>
<svg class="b" style="left:1101px;top:1834px;" width="28" height="28" viewBox="0 0 28 28"><circle cx="14" cy="14" r="12" fill="none" stroke="#ececee" stroke-width="2"/><path d="M7.4 10.2 H20.6 M9.6 14.4 H18.4 M11.8 18.4 H16.2" stroke="#ececee" stroke-width="2" stroke-linecap="round"/></svg>
<span class="t" style="left:1135.24px;top:1835px;font-size:22px;line-height:26px;color:#7e7e82;letter-spacing:0.970px;-webkit-text-stroke:0.45px #7e7e82;">Filter</span>
<span class="t" style="left:1467.00px;top:1835px;font-size:22px;line-height:26px;color:#ececee;letter-spacing:0.726px;-webkit-text-stroke:0.45px #ececee;">All Output</span>
<svg class="b" style="left:1578px;top:1838px;" width="13" height="20" viewBox="0 0 13 20"><g fill="none" stroke="#d6d6d8" stroke-width="2" stroke-linecap="round" stroke-linejoin="round"><path d="M2.2 6.4 L6.4 2.2 L10.6 6.4 M2.2 12.4 L6.4 16.6 L10.6 12.4"/></g></svg>
<div class="b" style="left:1684px;top:1826px;width:317px;height:43px;background:#34353a;border-radius:11px;box-shadow:inset 0 0 0 1.5px #4a4b50;"></div>
<svg class="b" style="left:1693px;top:1834px;" width="28" height="28" viewBox="0 0 28 28"><circle cx="14" cy="14" r="12" fill="none" stroke="#ececee" stroke-width="2"/><path d="M7.4 10.2 H20.6 M9.6 14.4 H18.4 M11.8 18.4 H16.2" stroke="#ececee" stroke-width="2" stroke-linecap="round"/></svg>
<span class="t" style="left:1726.84px;top:1835px;font-size:22px;line-height:26px;color:#7e7e82;letter-spacing:0.970px;-webkit-text-stroke:0.45px #7e7e82;">Filter</span>
<svg class="b" style="left:2033px;top:1832px;" width="26" height="32" viewBox="0 0 26 32"><g fill="none" stroke="#a9a9ab" stroke-width="1.9" stroke-linejoin="round"><path d="M2 6.6 H24"/><path d="M8.6 6.4 V3.4 Q8.6 2.2 9.8 2.2 H16.2 Q17.4 2.2 17.4 3.4 V6.4"/><path d="M4.2 7 L5.6 27 Q5.8 29.4 8 29.4 H18 Q20.2 29.4 20.4 27 L21.8 7"/><path d="M9.2 11 L9.8 25 M13 11 V25 M16.8 11 L16.2 25" stroke-width="1.7"/></g></svg>
<div class="b" style="left:2073px;top:1832px;width:2px;height:32px;background:#48494c;"></div>
<svg class="b" style="left:2086px;top:1833px;" width="28" height="28" viewBox="0 0 28 28"><rect x="2" y="2" width="24" height="24" rx="3.5" fill="none" stroke="#3b82f7" stroke-width="2.1"/><path d="M10.4 2 V26" stroke="#3b82f7" stroke-width="2"/></svg>
<svg class="b" style="left:2122px;top:1833px;" width="28" height="28" viewBox="0 0 28 28"><rect x="2" y="2" width="24" height="24" rx="3.5" fill="none" stroke="#3b82f7" stroke-width="2.1"/><path d="M17.6 2 V26" stroke="#3b82f7" stroke-width="2"/></svg>
<svg class="b" style="left:2467px;top:167px;" width="22" height="28" viewBox="0 0 22 28"><path d="M3.4 1 H10.6 V8.4 Q10.6 11 13.2 11 H21 V24.4 Q21 27 18.4 27 H3.6 Q1 27 1 24.4 V3.4 Q1 1 3.4 1 Z M12.6 1.4 L20.6 9.4 H14 Q12.6 9.4 12.6 8 Z" fill="#377dff"/></svg>
<svg class="b" style="left:2523px;top:167px;" width="28" height="28" viewBox="0 0 28 28"><circle cx="14" cy="14" r="12" fill="none" stroke="#a9a9ab" stroke-width="1.9"/><path d="M14.4 6.4 V14.4 H8" fill="none" stroke="#a9a9ab" stroke-width="1.9"/></svg>
<svg class="b" style="left:2583px;top:167px;" width="28" height="28" viewBox="0 0 28 28"><circle cx="14" cy="14" r="12" fill="none" stroke="#a9a9ab" stroke-width="1.9"/></svg>
<span class="t" style="left:2591.14px;top:170px;font-size:19px;line-height:23px;color:#a9a9ab;font-weight:bold;-webkit-text-stroke:0.25px #a9a9ab;">?</span>
<span class="t" style="left:2178.97px;top:218px;font-size:25px;line-height:30px;color:#9c9c9f;letter-spacing:0.422px;font-weight:bold;-webkit-text-stroke:0.4px #9c9c9f;">Identity and Type</span>
<span class="t" style="left:2268.14px;top:270px;font-size:22px;line-height:26px;color:#dededf;letter-spacing:-0.660px;-webkit-text-stroke:0.45px #dededf;">Name</span>
<span class="t" style="left:2336.47px;top:270px;font-size:22px;line-height:26px;color:#dededf;letter-spacing:1.250px;-webkit-text-stroke:0.45px #dededf;">public</span>
<div class="b" style="left:2181px;top:304px;width:713px;height:2px;background:#38393c;"></div>
<span class="t" style="left:2242.44px;top:320px;font-size:22px;line-height:26px;color:#dededf;letter-spacing:-0.024px;-webkit-text-stroke:0.45px #dededf;">Location</span>
<div class="b" style="left:2335px;top:316px;width:558px;height:32px;background:#57585a;border-radius:7px;box-shadow:0 1px 1px rgba(0,0,0,.35), inset 0 1px 0 rgba(255,255,255,.08);"></div>
<span class="t" style="left:2345.76px;top:318px;font-size:23px;line-height:28px;color:#ececee;letter-spacing:0.246px;-webkit-text-stroke:0.45px #ececee;">Relative to Project</span>
<div class="b" style="left:2865px;top:320px;width:24px;height:24px;background:#2f6fe4;border-radius:6px;background:linear-gradient(#3374ea,#2860d6);"></div>
<svg class="b" style="left:2869px;top:321.5px;" width="16" height="21" viewBox="0 0 16 21"><g fill="none" stroke="#fff" stroke-width="2.1" stroke-linecap="round" stroke-linejoin="round"><path d="M4 7.6 L8 3.6 L12 7.6 M4 13.4 L8 17.4 L12 13.4"/></g></svg>
<span class="t" style="left:2336.11px;top:358px;font-size:23px;line-height:28px;color:#ffffff;letter-spacing:0.785px;-webkit-text-stroke:0.45px #ffffff;">public</span>
<svg class="b" style="left:2871px;top:361px;" width="26" height="22" viewBox="0 0 26 22"><path d="M1 5.6 V3.6 Q1 1.6 3 1.6 H8 Q9.2 1.6 10 2.4 L10.6 3 Q11.4 3.6 12.6 3.6 H22.6 Q25 3.6 25 6 V6.4 H1 Z M1 8.2 H25 V18.4 Q25 21 22.4 21 H3.6 Q1 21 1 18.4 Z" fill="#a2a2a4"/></svg>
<span class="t" style="left:2241.64px;top:396px;font-size:22px;line-height:26px;color:#dededf;letter-spacing:-0.425px;-webkit-text-stroke:0.45px #dededf;">Full Path</span>
<span class="t" style="left:2337.00px;top:396px;font-size:22px;line-height:26px;color:#dededf;letter-spacing:0.946px;-webkit-text-stroke:0.45px #dededf;">/Users/dan/git/capacitor-testapp/ios/App/public</span>
<svg class="b" style="left:2841px;top:397px;" width="22" height="22" viewBox="0 0 22 22"><circle cx="11" cy="11" r="10.2" fill="#a2a2a4"/><path d="M5.4 11 H16 M11.8 6.4 L16.4 11 L11.8 15.6" fill="none" stroke="#1e1f21" stroke-width="2" stroke-linecap="round" stroke-linejoin="round"/></svg>
<div class="b" style="left:2181px;top:448px;width:713px;height:2px;background:#38393c;"></div>
<span class="t" style="left:2179.60px;top:460px;font-size:25px;line-height:30px;color:#9c9c9f;letter-spacing:-0.147px;font-weight:bold;-webkit-text-stroke:0.4px #9c9c9f;">On Demand Resource Tags</span>
<div class="b" style="left:2183px;top:514px;width:711px;height:36px;background:#2a2b2e;box-shadow:inset 0 0 0 1.5px #3c3d40;"></div>
<span class="t" style="left:2189.56px;top:520px;font-size:22px;line-height:26px;color:#5e5e62;letter-spacing:0.597px;-webkit-text-stroke:0.45px #5e5e62;">Tags</span>
<div class="b" style="left:2181px;top:576px;width:713px;height:2px;background:#38393c;"></div>
<span class="t" style="left:2180.35px;top:588px;font-size:25px;line-height:30px;color:#9c9c9f;letter-spacing:0.244px;font-weight:bold;-webkit-text-stroke:0.4px #9c9c9f;">Target Membership</span>
<div class="b" style="left:2181px;top:630px;width:713px;height:128px;background:transparent;box-shadow:inset 0 0 0 2px #4c4d50;"></div>
<div class="b" style="left:2197px;top:642px;width:24px;height:24px;background:#2f6fe4;border-radius:5.5px;background:linear-gradient(#3576ec,#2860d6);"></div>
<svg class="b" style="left:2197px;top:642px;" width="24" height="24" viewBox="0 0 24 24"><path d="M6 12.6 L10.2 17.4 L18 6.8" fill="none" stroke="#fff" stroke-width="2.8" stroke-linecap="round" stroke-linejoin="round"/></svg>
<svg class="b" style="left:2237px;top:638px;" width="32" height="32" viewBox="0 0 32 32"><rect width="32" height="32" fill="#fff"/>
<g stroke-width="3.1" fill="none"><path d="M13.3 9.0 L23.6 18.6" stroke="#2f9dff"/><path d="M18.6 13.9 L23.7 8.8" stroke="#2f9dff"/>
<path d="M8.8 13.9 L19.1 23.3" stroke="#53b9ff"/><path d="M13.9 18.7 L8.9 23.7" stroke="#53b9ff"/></g></svg>
<span class="t" style="left:2275.60px;top:642px;font-size:22px;line-height:26px;color:#ececee;letter-spacing:1.360px;-webkit-text-stroke:0.45px #ececee;">App</span>
<div class="b" style="left:2181px;top:774px;width:713px;height:2px;background:#38393c;"></div>
<div class="b" id="menu" style="left:346px;top:336px;width:430px;height:768px;border-radius:12px;background:#535453;box-shadow:0 0 0 1px rgba(0,0,0,.55), inset 0 0 0 1.5px #6d6e6d, 0 12px 36px rgba(0,0,0,.28), 0 2px 8px rgba(0,0,0,.16);"></div>
<div class="b" style="left:374px;top:400px;width:374px;height:2px;background:#797a79;"></div>
<div class="b" style="left:374px;top:598px;width:374px;height:2px;background:#797a79;"></div>
<div class="b" style="left:374px;top:664px;width:374px;height:2px;background:#797a79;"></div>
<div class="b" style="left:374px;top:774px;width:374px;height:2px;background:#797a79;"></div>
<div class="b" style="left:374px;top:840px;width:374px;height:2px;background:#797a79;"></div>
<div class="b" style="left:374px;top:906px;width:374px;height:2px;background:#797a79;"></div>
<div class="b" style="left:374px;top:972px;width:374px;height:2px;background:#797a79;"></div>
<div class="b" style="left:374px;top:1038px;width:374px;height:2px;background:#797a79;"></div>
<div class="b" style="left:356px;top:786px;width:410px;height:44px;background:#3f8ce6;border-radius:8px;"></div>
<span class="t" style="left:373.80px;top:353px;font-size:26px;line-height:31px;color:#f0f0f0;letter-spacing:0.359px;-webkit-text-stroke:0.45px #f0f0f0;">Show in Finder</span>
<span class="t" style="left:373.80px;top:419px;font-size:26px;line-height:31px;color:#8e8f8e;letter-spacing:0.476px;-webkit-text-stroke:0.45px #8e8f8e;">Open in Tab</span>
<span class="t" style="left:373.80px;top:463px;font-size:26px;line-height:31px;color:#8e8f8e;letter-spacing:0.462px;-webkit-text-stroke:0.45px #8e8f8e;">Open in New Window</span>
<span class="t" style="left:373.80px;top:507px;font-size:26px;line-height:31px;color:#f0f0f0;letter-spacing:0.527px;-webkit-text-stroke:0.45px #f0f0f0;">Open with External Editor</span>
<span class="t" style="left:373.80px;top:551px;font-size:26px;line-height:31px;color:#f0f0f0;letter-spacing:0.595px;-webkit-text-stroke:0.45px #f0f0f0;">Open As</span>
<svg class="b" style="left:732px;top:555px;" width="16" height="22" viewBox="0 0 16 22"><path d="M4 3.4 L11.6 11 L4 18.6" fill="none" stroke="#f0f0f0" stroke-width="3.2" stroke-linecap="round" stroke-linejoin="round"/></svg>
<span class="t" style="left:373.80px;top:617px;font-size:26px;line-height:31px;color:#f0f0f0;letter-spacing:0.471px;-webkit-text-stroke:0.45px #f0f0f0;">Show File Inspector</span>
<span class="t" style="left:373.80px;top:683px;font-size:26px;line-height:31px;color:#f0f0f0;letter-spacing:0.330px;-webkit-text-stroke:0.45px #f0f0f0;">New File</span>
<span class="t" style="left:373.80px;top:727px;font-size:26px;line-height:31px;color:#f0f0f0;letter-spacing:0.514px;-webkit-text-stroke:0.45px #f0f0f0;">Add Files to “public”...</span>
<span class="t" style="left:373.80px;top:793px;font-size:26px;line-height:31px;color:#fff;letter-spacing:0.682px;-webkit-text-stroke:0.45px #fff;">Delete</span>
<span class="t" style="left:373.80px;top:859px;font-size:26px;line-height:31px;color:#f0f0f0;letter-spacing:0.490px;-webkit-text-stroke:0.45px #f0f0f0;">New Folder</span>
<span class="t" style="left:373.80px;top:925px;font-size:26px;line-height:31px;color:#f0f0f0;letter-spacing:0.378px;-webkit-text-stroke:0.45px #f0f0f0;">Find in Selected Folders...</span>
<span class="t" style="left:373.80px;top:991px;font-size:26px;line-height:31px;color:#f0f0f0;letter-spacing:0.642px;-webkit-text-stroke:0.45px #f0f0f0;">Source Control</span>
<svg class="b" style="left:732px;top:995px;" width="16" height="22" viewBox="0 0 16 22"><path d="M4 3.4 L11.6 11 L4 18.6" fill="none" stroke="#f0f0f0" stroke-width="3.2" stroke-linecap="round" stroke-linejoin="round"/></svg>
<span class="t" style="left:373.80px;top:1057px;font-size:26px;line-height:31px;color:#f0f0f0;letter-spacing:0.600px;-webkit-text-stroke:0.45px #f0f0f0;">Project Navigator Help</span>
</div></div>
<div id="rim"></div>
<svg class="b" style="left:0;top:0;" width="3022" height="2024" viewBox="0 0 3022 2024"><polygon points="476.5,261.4 388.8,301.9 380.3,283.6 345.4,327.2 401.3,329.0 392.8,310.6 480.5,270.2" fill="#ff2600"/><polygon points="884.0,682.2 761.8,777.0 749.5,761.1 725.3,811.5 780.1,800.6 767.7,784.6 889.8,689.8" fill="#ff2600"/></svg>
<span class="t" style="left:498.60px;top:214px;font-size:66px;line-height:79px;color:#ff2600;font-weight:bold;-webkit-text-stroke:0.25px #ff2600;clip-path:polygon(0 0,100% 0,100% 54.6px,25.2px 54.6px,25.2px 100%,14.8px 100%,14.8px 54.6px,0 54.6px);">1</span>
<span class="t" style="left:900.59px;top:628px;font-size:66px;line-height:79px;color:#ff2600;font-weight:bold;-webkit-text-stroke:0.25px #ff2600;">2</span>
</body></html>
